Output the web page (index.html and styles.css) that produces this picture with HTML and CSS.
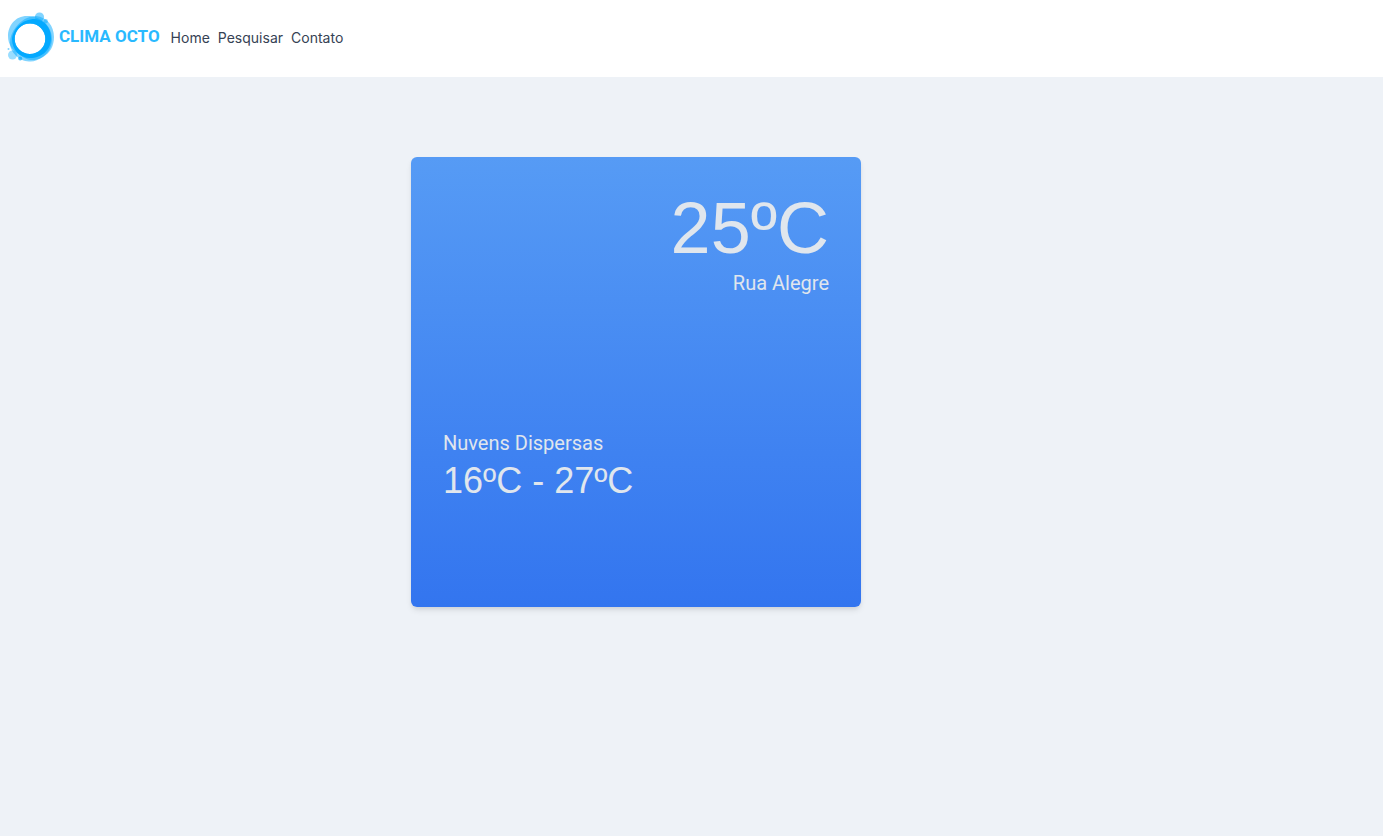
FILE: index.html
```html
<!DOCTYPE html>
<html lang="pt-BR">
<head>
<meta charset="utf-8">
<meta name="viewport" content="width=device-width, initial-scale=1">
<title>Clima Octo</title>
<link rel="stylesheet" href="styles.css">
</head>
<body class="page">
<header class="header">
  <a class="brand" href="#">
    <svg class="brand-mark" viewBox="0 0 48 52" aria-hidden="true">
      <g fill="#03a9ff">
        <circle cx="32.500" cy="5" r="4.600" opacity=".5"/>
        <circle cx="38.700" cy="9.300" r="2.200" opacity=".5"/>
        <circle cx="5.500" cy="43" r="4.500" opacity=".4"/>
        <circle cx="13.200" cy="46.500" r="2" opacity=".7"/>
        <circle cx="1.500" cy="37" r="1" opacity=".5"/>
      </g>
      <g fill-rule="evenodd" fill="#03a9ff">
        <path opacity=".5" d="M20 4C8 4 1 14 1 24c0 9 5 15 11 18 5 4 8 6 14 6 10 0 19-9 19-21C45 14 34 4 20 4zM23 11.500a15.300 15.300 0 1 1 0 30.600a15.300 15.300 0 1 1 0-30.600z"/>
        <path opacity=".5" d="M29 4c11 1 18 10 18 21 0 9-4 16-11 20-5 3-9 5-14 4.500C12 49 3 40 3 31c0-6 2-11 6-16 5-6 11-11 20-11zM23 11.500a15.300 15.300 0 1 0 0 30.600a15.300 15.300 0 1 0 0-30.600z"/>
        <path d="M28 7C15 7 6 17 5 27c0 11 8 19 18 19 12 0 21-8 21-20C44 15 37 8 28 7zM23 11.500a15.300 15.300 0 1 1 0 30.600a15.300 15.300 0 1 1 0-30.600z"/>
      </g>
    </svg>
    <span class="brand-name">CLIMA OCTO</span>
  </a>
  <nav class="nav">
    <a class="nav-link" href="#">Home</a>
    <a class="nav-link" href="#">Pesquisar</a>
    <a class="nav-link" href="#">Contato</a>
  </nav>
</header>
<main class="content">
  <section class="card">
    <div class="current">
      <h1 class="temperature">25ºC</h1>
      <p class="detail">Rua Alegre</p>
    </div>
    <div class="forecast">
      <p class="detail">Nuvens Dispersas</p>
      <p class="range">16ºC - 27ºC</p>
    </div>
  </section>
</main>
</body>
</html>
```
FILE: styles.css
```css
* {
  box-sizing: border-box;
}

.page {
  margin: 0;
  min-height: 100vh;
  background: #eef2f7;
  color: #2d3748;
  font-family: Inter, "Liberation Sans", sans-serif;
}

.header {
  display: flex;
  align-items: center;
  gap: 11px;
  padding: 12px 7px 13px;
  background: #fff;
}

.brand {
  display: flex;
  align-items: center;
  gap: 4px;
  text-decoration: none;
}

.brand-mark {
  display: block;
  width: 48px;
  height: 52px;
}

.brand-name {
  padding-bottom: 4px;
  color: #29b9ff;
  font: 700 17px/24px Roboto, sans-serif;
}

.nav {
  display: flex;
  gap: 8px;
}

.nav-link {
  color: #364254;
  font-size: 14px;
  line-height: 20px;
  text-decoration: none;
}

.content {
  display: grid;
  grid-template-columns: 411fr minmax(auto, 450px) 522fr;
  padding: 80px 0;
}

.card {
  grid-column: 2;
  display: flex;
  flex-direction: column;
  gap: 128px;
  min-height: 450px;
  padding: 32px;
  border-radius: 6px;
  background: linear-gradient(#569bf5, #3375ef);
  box-shadow: 0 4px 6px -1px rgba(0, 0, 0, 0.1), 0 2px 4px -1px rgba(0, 0, 0, 0.06);
  color: #e0e6ed;
  font-family: Roboto, sans-serif;
}

.current {
  text-align: right;
}

.temperature,
.detail,
.range {
  margin: 0;
  font-weight: 400;
}

.temperature,
.range {
  font-family: "Liberation Sans", sans-serif;
}

.temperature {
  font-size: 72px;
  line-height: 78px;
}

.detail {
  font-size: 20px;
  line-height: 32px;
}

.range {
  font-size: 36px;
  line-height: 44px;
}
```
